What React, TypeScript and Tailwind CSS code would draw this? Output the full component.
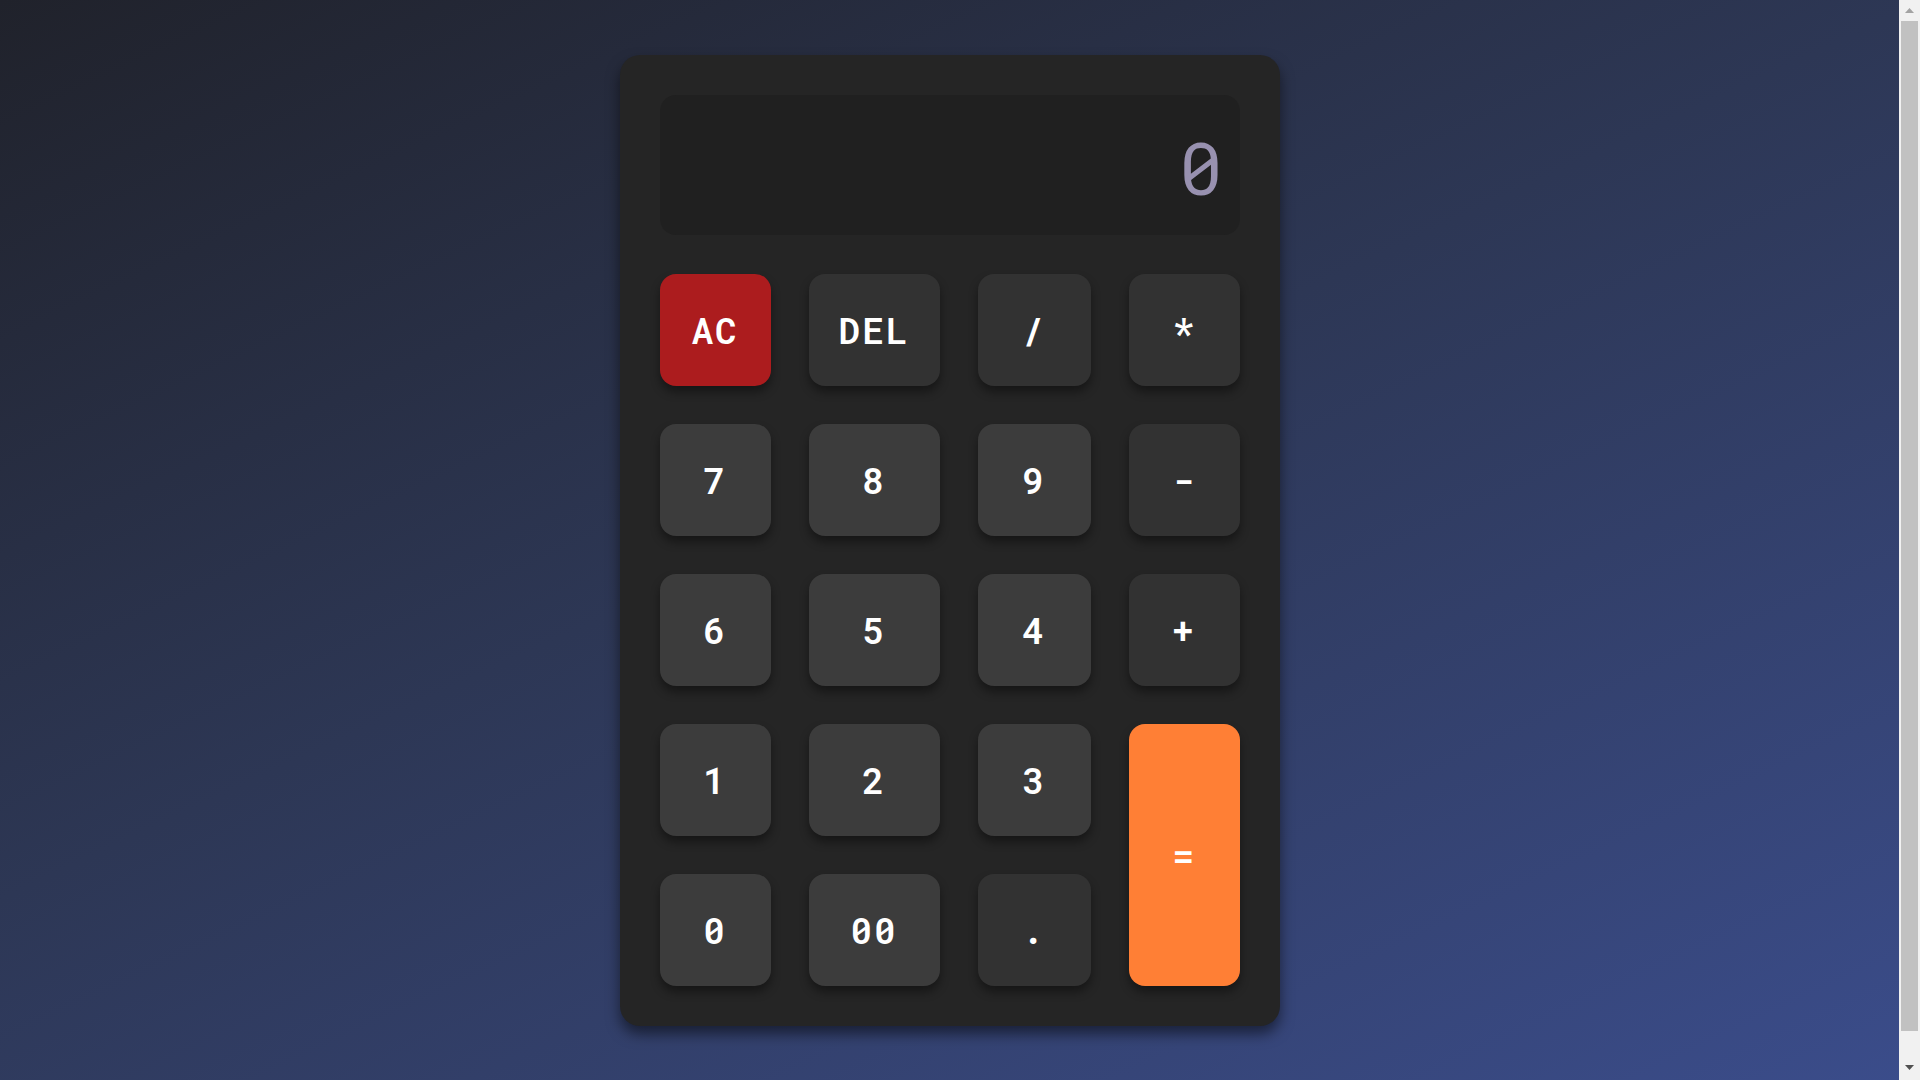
import React from "react";

type Key = { label: string; kind: "digit" | "op" | "ac" | "eq" };

const keys: Key[] = [
  { label: "AC", kind: "ac" },
  { label: "DEL", kind: "op" },
  { label: "/", kind: "op" },
  { label: "*", kind: "op" },
  { label: "7", kind: "digit" },
  { label: "8", kind: "digit" },
  { label: "9", kind: "digit" },
  { label: "-", kind: "op" },
  { label: "6", kind: "digit" },
  { label: "5", kind: "digit" },
  { label: "4", kind: "digit" },
  { label: "+", kind: "op" },
  { label: "1", kind: "digit" },
  { label: "2", kind: "digit" },
  { label: "3", kind: "digit" },
  { label: "=", kind: "eq" },
  { label: "0", kind: "digit" },
  { label: "00", kind: "digit" },
  { label: ".", kind: "op" },
];

function cls(k: Key) {
  const base =
    "flex items-center justify-center rounded-[16px] text-white text-[36px] font-semibold tracking-[2px] leading-none shadow-[0_6px_10px_rgba(0,0,0,0.4)]";
  if (k.kind === "ac") return base + " bg-[#ac1c1e]";
  if (k.kind === "eq") return base + " bg-[#ff7f35] row-span-2";
  if (k.kind === "op") return base + " bg-[#323232]";
  return base + " bg-[#3c3c3c]";
}

function Scrollbar() {
  return (
    <div className="flex h-screen w-[21px] shrink-0 flex-col items-center bg-[#f1f1f1]">
      <div className="flex h-[21px] w-full items-center justify-center">
        <svg width="9" height="5" viewBox="0 0 9 5">
          <path d="M0 5 L4.5 0 L9 5 Z" fill="#a3a3a3" />
        </svg>
      </div>
      <div className="h-[1010px] w-[17px] bg-[#c1c1c1]" />
      <div className="flex-1" />
      <div className="flex h-[26px] w-full items-center justify-center">
        <svg width="9" height="5" viewBox="0 0 9 5">
          <path d="M0 0 L9 0 L4.5 5 Z" fill="#505050" />
        </svg>
      </div>
    </div>
  );
}

export default function App() {
  return (
    <div
      className="flex h-screen w-full overflow-hidden"
      style={{ fontFamily: "'Roboto Mono', 'DejaVu Sans Mono', monospace" }}
    >
      <div className="h-screen flex-1 overflow-hidden">
        <div className="min-h-[1114px] w-full bg-[linear-gradient(155deg,#20222b_0%,#2d3755_45%,#3b4d8c_100%)] pt-[55px]">
          <div className="mx-auto w-[660px] rounded-[20px] bg-[#252525] p-10 shadow-[0_8px_14px_rgba(0,0,0,0.5)]">
            <div className="mb-[39px] flex h-[140px] items-center justify-end rounded-[16px] bg-[#202020] pr-[17px] pt-[6px]">
              <span className="text-[72px] leading-none text-[#9891b0]">0</span>
            </div>
            <div className="grid grid-cols-[111px_131px_113px_111px] auto-rows-[112px] gap-[38px]">
              {keys.map((k) => (
                <button key={k.label} className={cls(k)}>
                  {k.label}
                </button>
              ))}
            </div>
          </div>
        </div>
      </div>
      <Scrollbar />
    </div>
  );
}
